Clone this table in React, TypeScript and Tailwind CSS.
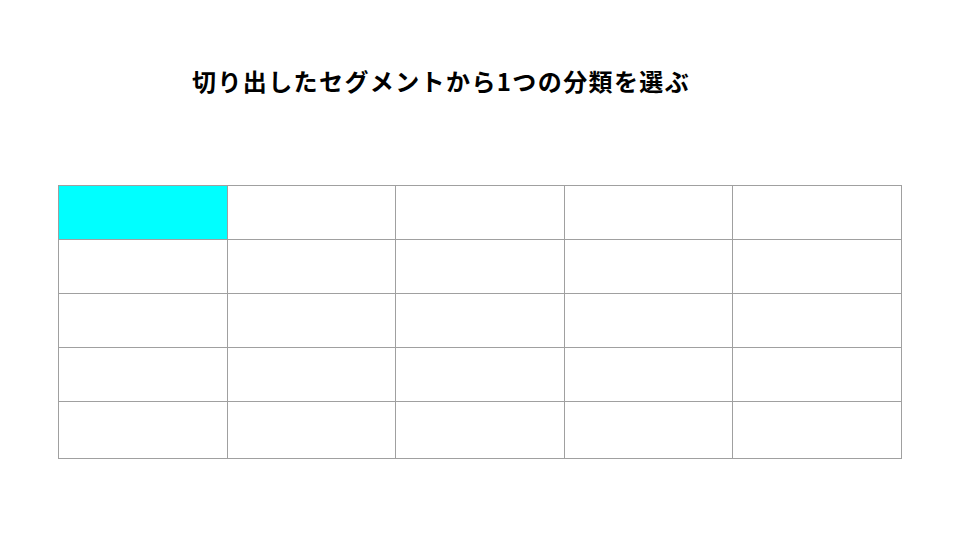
import React from "react";

const rows = [54, 54, 54, 54, 57];
const cols = 5;

export default function App() {
  return (
    <div className="w-[960px] h-[540px] bg-white relative overflow-hidden" style={{ fontFamily: '"Noto Sans CJK JP", sans-serif' }}>
      <div className="pt-[64px] pl-[192px] h-[185px]">
        <h1 className="text-[24px] leading-[34px] font-bold text-black tracking-[1.4px]">
          切り出したセグメントから1つの分類を選ぶ
        </h1>
      </div>
      <div className="pl-[58px]">
        <table className="border-collapse">
          <tbody>
            {rows.map((h, r) => (
              <tr key={r}>
                {Array.from({ length: cols }).map((_, c) => (
                  <td
                    key={c}
                    className={`border border-[#a0a0a0] p-0 w-[168.6px] ${r === 0 && c === 0 ? "bg-[#00ffff]" : "bg-white"}`}
                    style={{ height: h }}
                  />
                ))}
              </tr>
            ))}
          </tbody>
        </table>
      </div>
    </div>
  );
}
